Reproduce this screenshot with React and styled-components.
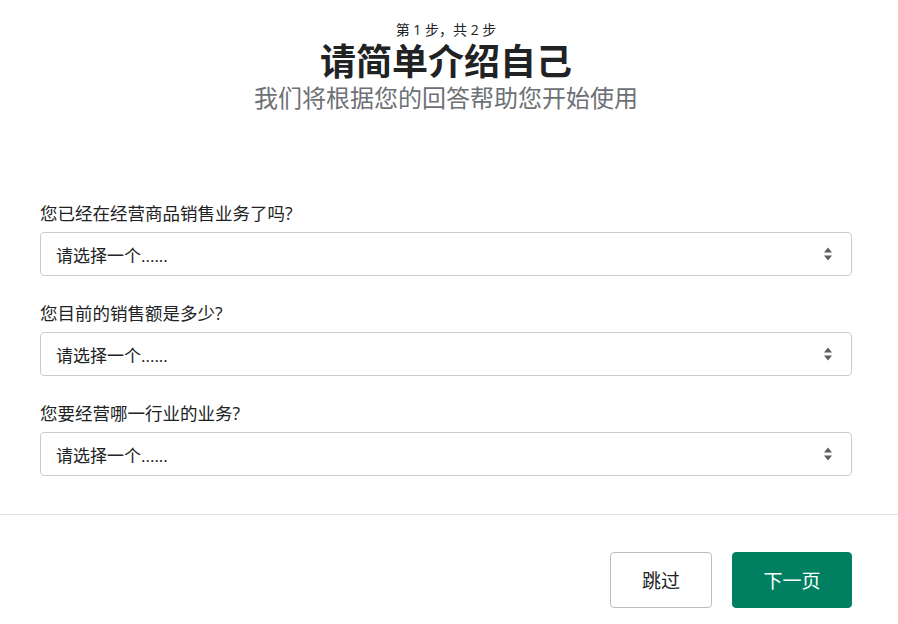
import styled, { createGlobalStyle } from "styled-components";

const GlobalStyle = createGlobalStyle`
  body {
    margin: 0;
    background: #fff;
    font-family: "Open Sans", "Noto Sans CJK SC", sans-serif;
    color: #202223;
  }
`;

const Page = styled.div`
  width: 898px;
  min-height: 624px;
  display: flex;
  flex-direction: column;
`;

const Header = styled.header`
  display: flex;
  flex-direction: column;
  align-items: center;
  padding: 22px 46px 0 40px;
`;

const Step = styled.p`
  margin: 0;
  font-size: 14px;
  line-height: 16px;
  color: #202223;
`;

const Title = styled.h1`
  margin: 3px 0 0;
  font-size: 36px;
  line-height: 42px;
  font-weight: 700;
  color: #202223;
`;

const Subtitle = styled.p`
  margin: 1px 0 0;
  font-size: 24px;
  line-height: 28px;
  color: #6d7175;
`;

const Form = styled.form`
  display: flex;
  flex-direction: column;
  gap: 25px;
  padding: 89px 46px 38px 40px;
`;

const Field = styled.div`
  display: flex;
  flex-direction: column;
  gap: 7px;
`;

const Label = styled.label`
  font-size: 17.5px;
  line-height: 24px;
  color: #202223;
`;

const SelectBox = styled.div`
  height: 44px;
  box-sizing: border-box;
  border: 1px solid #c9cccf;
  border-radius: 4px;
  display: flex;
  align-items: center;
  justify-content: space-between;
  padding: 0 18px 0 15px;
  font-size: 17px;
  color: #202223;
  background: #fff;
`;

const Divider = styled.hr`
  margin: 0;
  border: none;
  border-top: 1px solid #e1e3e5;
`;

const Footer = styled.div`
  display: flex;
  justify-content: flex-end;
  gap: 20px;
  padding: 37px 46px 0 40px;
`;

const Button = styled.button`
  height: 56px;
  box-sizing: border-box;
  border-radius: 4px;
  font-family: inherit;
  font-size: 19px;
  padding: 0;
  width: ${(p) => (p.$primary ? "120px" : "102px")};
  background: ${(p) => (p.$primary ? "#008060" : "#fff")};
  color: ${(p) => (p.$primary ? "#fff" : "#202223")};
  border: 1px solid ${(p) => (p.$primary ? "#008060" : "#babfc3")};
`;

const Arrows = () => (
  <svg width="10" height="16" viewBox="0 0 10 16">
    <path d="M5 1.5 L9 6.5 H1 Z" fill="#5c5f62" />
    <path d="M5 14.5 L9 9.5 H1 Z" fill="#5c5f62" />
  </svg>
);

const questions = [
  "您已经在经营商品销售业务了吗?",
  "您目前的销售额是多少?",
  "您要经营哪一行业的业务?",
];

export default function App() {
  return (
    <Page>
      <GlobalStyle />
      <Header>
        <Step>第 1 步，共 2 步</Step>
        <Title>请简单介绍自己</Title>
        <Subtitle>我们将根据您的回答帮助您开始使用</Subtitle>
      </Header>
      <Form>
        {questions.map((q) => (
          <Field key={q}>
            <Label>{q}</Label>
            <SelectBox>
              <span>请选择一个......</span>
              <Arrows />
            </SelectBox>
          </Field>
        ))}
      </Form>
      <Divider />
      <Footer>
        <Button type="button">跳过</Button>
        <Button type="button" $primary>
          下一页
        </Button>
      </Footer>
    </Page>
  );
}
